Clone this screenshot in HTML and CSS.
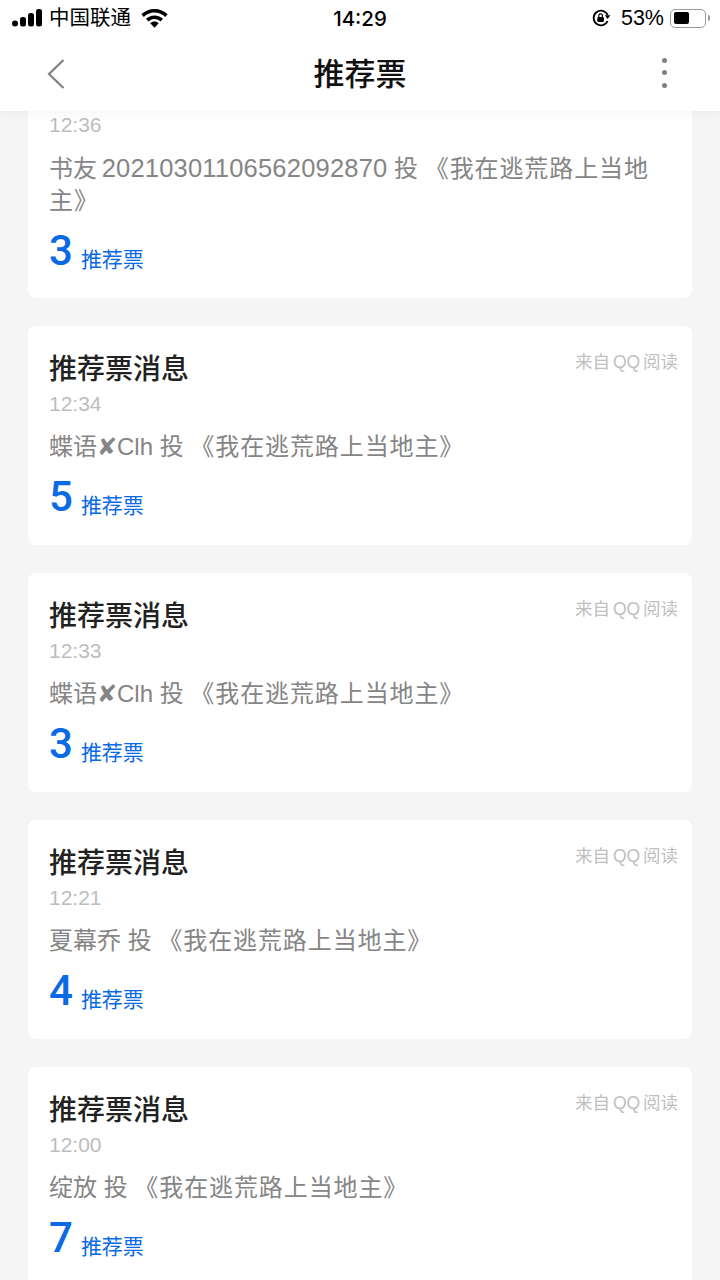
FILE: index.html
```html
<!DOCTYPE html>
<html lang="zh-CN">
<head>
    <meta charset="UTF-8">
    <meta name="viewport" content="width=device-width, initial-scale=1.0">
    <title>推荐票</title>
    <link rel="stylesheet" href="styles.css">
</head>
<body>

<header class="top">
    <div class="status">
        <div class="status-left">
            <svg class="signal" width="30" height="18" viewBox="0 0 30 18">
                <rect x="0" y="11.5" width="6" height="6" rx="3" />
                <rect x="8" y="8" width="6" height="9.5" rx="2.5" />
                <rect x="16" y="4" width="6" height="13.5" rx="2.5" />
                <rect x="24" y="0" width="6" height="17.5" rx="2.5" />
            </svg>
            <span class="carrier">中国联通</span>
            <svg class="wifi" width="27" height="19" viewBox="0 0 27 19">
                <path d="M13.5 0C8.4 0 3.8 2 .4 5.3l2.4 2.6C5.6 5.2 9.3 3.6 13.5 3.6s7.9 1.6 10.7 4.3l2.4-2.6C23.2 2 18.6 0 13.5 0z" />
                <path d="M13.5 6.4c-3.3 0-6.3 1.3-8.5 3.4l2.5 2.6c1.6-1.5 3.7-2.4 6-2.4s4.4.9 6 2.4l2.5-2.6c-2.2-2.1-5.2-3.4-8.5-3.4z" />
                <path d="M13.5 12.6c-1.7 0-3.1.6-4.2 1.7l4.2 4.5 4.2-4.5c-1.1-1.1-2.5-1.7-4.2-1.7z" />
            </svg>
        </div>
        <div class="clock">14:29</div>
        <div class="status-right">
            <svg class="lock" width="20" height="20" viewBox="0 0 20 20">
                <path d="M16.6 7A7.3 7.3 0 1 0 16.6 13" fill="none" stroke="#000" stroke-width="1.8" />
                <path d="M13.8 7.2h5.6L16.6 11z" />
                <rect x="6.3" y="9" width="6.6" height="5" rx="1" />
                <path d="M7.8 9V7.6a1.8 1.8 0 0 1 3.6 0V9" fill="none" stroke="#000" stroke-width="1.2" />
            </svg>
            <span class="percent">53%</span>
            <div class="battery"><div class="battery-fill"></div></div>
            <div class="battery-tip"></div>
        </div>
    </div>
    <nav class="nav">
        <svg class="back" width="18" height="30" viewBox="0 0 18 30">
            <path d="M16.5 1 2 15l14.5 14" fill="none" stroke="#808080" stroke-width="2.2" />
        </svg>
        <h1>推荐票</h1>
        <div class="more"><i></i><i></i><i></i></div>
    </nav>
</header>

<main class="list">
    <section class="card card-long">
        <div class="card-head">
            <h2>推荐票消息</h2>
            <span class="source">来自 QQ 阅读</span>
        </div>
        <p class="time">12:36</p>
        <p class="msg">书友 <span class="uid">20210301106562092870</span> 投 <span class="book">《我在逃荒路上当地主》</span></p>
        <p class="votes"><b>3</b><span>推荐票</span></p>
    </section>
    <section class="card">
        <div class="card-head">
            <h2>推荐票消息</h2>
            <span class="source">来自 QQ 阅读</span>
        </div>
        <p class="time">12:34</p>
        <p class="msg">蝶语✘Clh 投 <span class="book">《我在逃荒路上当地主》</span></p>
        <p class="votes"><b>5</b><span>推荐票</span></p>
    </section>
    <section class="card">
        <div class="card-head">
            <h2>推荐票消息</h2>
            <span class="source">来自 QQ 阅读</span>
        </div>
        <p class="time">12:33</p>
        <p class="msg">蝶语✘Clh 投 <span class="book">《我在逃荒路上当地主》</span></p>
        <p class="votes"><b>3</b><span>推荐票</span></p>
    </section>
    <section class="card">
        <div class="card-head">
            <h2>推荐票消息</h2>
            <span class="source">来自 QQ 阅读</span>
        </div>
        <p class="time">12:21</p>
        <p class="msg">夏幕乔 投 <span class="book">《我在逃荒路上当地主》</span></p>
        <p class="votes"><b>4</b><span>推荐票</span></p>
    </section>
    <section class="card">
        <div class="card-head">
            <h2>推荐票消息</h2>
            <span class="source">来自 QQ 阅读</span>
        </div>
        <p class="time">12:00</p>
        <p class="msg">绽放 投 <span class="book">《我在逃荒路上当地主》</span></p>
        <p class="votes"><b>7</b><span>推荐票</span></p>
    </section>
</main>

</body>
</html>
```

FILE: styles.css
```css
html, body {
    height: 1280px;
    overflow: hidden;
}

body {
    margin: 0;
    background-color: #f5f5f5;
    font-family: "Liberation Sans", "Noto Sans CJK SC", sans-serif;
}

.top {
    position: relative;
    z-index: 2;
    height: 111px;
    background-color: #fff;
    box-shadow: 0 1px 12px rgba(0,0,0,0.05);
}

.status {
    height: 36px;
    display: flex;
    justify-content: space-between;
    align-items: center;
    padding: 0 10px 0 12px;
    color: #000;
    position: relative;
}

.status-left, .status-right {
    display: flex;
    align-items: center;
}

.carrier {
    margin-left: 7px;
    font-size: 20.5px;
    line-height: 36px;
}

.wifi {
    margin-left: 10px;
}

.clock {
    position: absolute;
    left: 0;
    right: 0;
    text-align: center;
    font-family: Inter, "Liberation Sans", sans-serif;
    font-size: 20.5px;
    font-weight: 500;
}

.lock {
    margin-right: 10px;
}

.percent {
    font-size: 21.5px;
    margin-right: 6px;
}

.battery {
    width: 36px;
    height: 19px;
    border: 1.5px solid #999;
    border-radius: 5px;
    padding: 2.5px;
    box-sizing: border-box;
}

.battery-fill {
    width: 15px;
    height: 100%;
    background-color: #000;
    border-radius: 2px;
}

.battery-tip {
    width: 2px;
    height: 6px;
    margin-left: 2px;
    background-color: #9a9a9a;
    border-radius: 0 2px 2px 0;
}

.nav {
    height: 75px;
    display: flex;
    justify-content: space-between;
    align-items: center;
    padding: 0 53px 3px 47px;
    position: relative;
}

.nav h1 {
    position: absolute;
    left: 0;
    right: 0;
    top: 16px;
    margin: 0;
    text-align: center;
    font-family: "Noto Sans CJK SC", sans-serif;
    font-size: 31px;
    line-height: 40px;
    font-weight: 500;
    color: #111;
}

.more {
    display: flex;
    flex-direction: column;
    gap: 7.5px;
    margin-top: -2px;
}

.more i {
    display: block;
    width: 5px;
    height: 5px;
    border-radius: 50%;
    background-color: #808080;
}

.list {
    margin-top: -64px;
    padding: 0 28px;
    display: flex;
    flex-direction: column;
    gap: 28px;
}

.card {
    background-color: #fff;
    border-radius: 8px;
    padding: 21px 14px 0 21px;
    height: 219px;
    box-sizing: border-box;
    flex-shrink: 0;
}

.card-long {
    height: 251px;
}

.card-head {
    display: flex;
    justify-content: space-between;
    align-items: flex-start;
}

.card h2 {
    margin: 0;
    font-family: "Noto Sans CJK SC", sans-serif;
    font-size: 28px;
    line-height: 40px;
    font-weight: 500;
    color: #222;
}

.source {
    font-size: 17.5px;
    line-height: 30px;
    word-spacing: -2px;
    color: #c0c0c0;
}

.time {
    margin: 2px 0 0;
    font-size: 21px;
    line-height: 30px;
    color: #bdbdbd;
}

.msg {
    margin: 12px 0 0;
    font-size: 24px;
    line-height: 32px;
    color: #858585;
}

.uid {
    font-size: 25.5px;
    letter-spacing: 0.2px;
    margin-left: -2px;
}

.book {
    letter-spacing: 0.9px;
}

.votes {
    margin: 9px 0 0;
    display: flex;
    align-items: flex-end;
    color: #0a6ae6;
}

.votes b {
    font-family: Roboto, "Liberation Sans", sans-serif;
    font-size: 42px;
    line-height: 50px;
    font-weight: 500;
}

.votes span {
    margin-left: 8px;
    font-size: 21px;
    line-height: 32px;
}
```
